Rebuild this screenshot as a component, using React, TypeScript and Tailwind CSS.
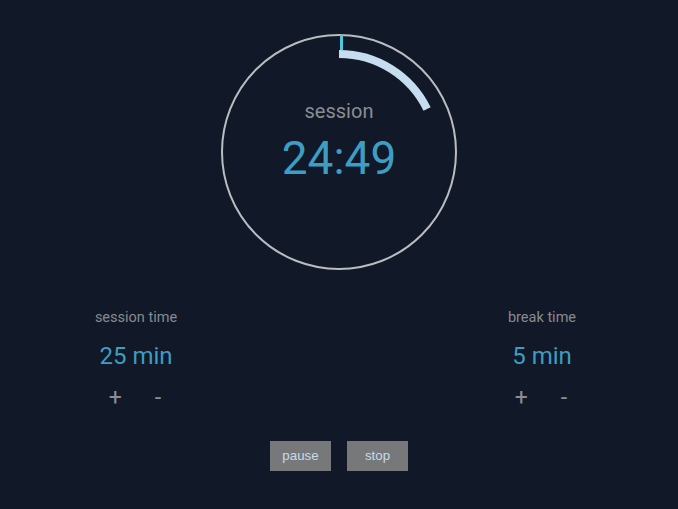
import React from "react";

function Dial() {
  const r = 98;
  const a = (64 * Math.PI) / 180;
  const ex = 118 + r * Math.sin(a);
  const ey = 118 - r * Math.cos(a);
  return (
    <div className="relative w-[236px] h-[236px]">
      <svg width="236" height="236" viewBox="0 0 236 236" className="block">
        <circle cx="118" cy="118" r="117" fill="none" stroke="#b9bcc0" strokeWidth="2" />
        <path
          d={`M 118 20 A ${r} ${r} 0 0 1 ${ex.toFixed(2)} ${ey.toFixed(2)}`}
          fill="none"
          stroke="#c6ddef"
          strokeWidth="8"
        />
        <line x1="120.5" y1="1" x2="120.5" y2="16" stroke="#4fc6dd" strokeWidth="3" />
      </svg>
      <div className="absolute inset-0 flex flex-col items-center">
        <div className="mt-[63px] text-[20px] leading-[28px] text-[#8a8d92]">session</div>
        <div className="mt-[6px] text-[46px] leading-[54px] text-[#3d9dc2]">24:49</div>
      </div>
    </div>
  );
}

function Setting({ label, value }: { label: string; value: string }) {
  return (
    <div className="w-[160px] flex flex-col items-center">
      <div className="text-[14.5px] leading-[20px] text-[#878a8f]">{label}</div>
      <div className="mt-[12px] text-[24px] leading-[32px] text-[#3d9dc2]">{value}</div>
      <div className="mt-[12px] flex items-center gap-[33px] text-[23px] leading-[28px] text-[#8a8d92] pr-[2px]">
        <span>+</span>
        <span>-</span>
      </div>
    </div>
  );
}

export default function App() {
  return (
    <div
      className="w-[678px] h-[509px] bg-[#111827] flex flex-col items-center pt-[34px]"
      style={{ fontFamily: "Roboto, 'Liberation Sans', sans-serif" }}
    >
      <Dial />
      <div className="w-full mt-[38px] px-[56px] flex justify-between">
        <Setting label="session time" value="25 min" />
        <Setting label="break time" value="5 min" />
      </div>
      <div className="mt-[29px] flex gap-[16px]">
        <button className="w-[61px] h-[30px] bg-[#777879] text-[#c9d9e8] text-[13.33px] font-['Liberation_Sans',Arial,sans-serif]">
          pause
        </button>
        <button className="w-[61px] h-[30px] bg-[#777879] text-[#c9d9e8] text-[13.33px] font-['Liberation_Sans',Arial,sans-serif]">
          stop
        </button>
      </div>
    </div>
  );
}
